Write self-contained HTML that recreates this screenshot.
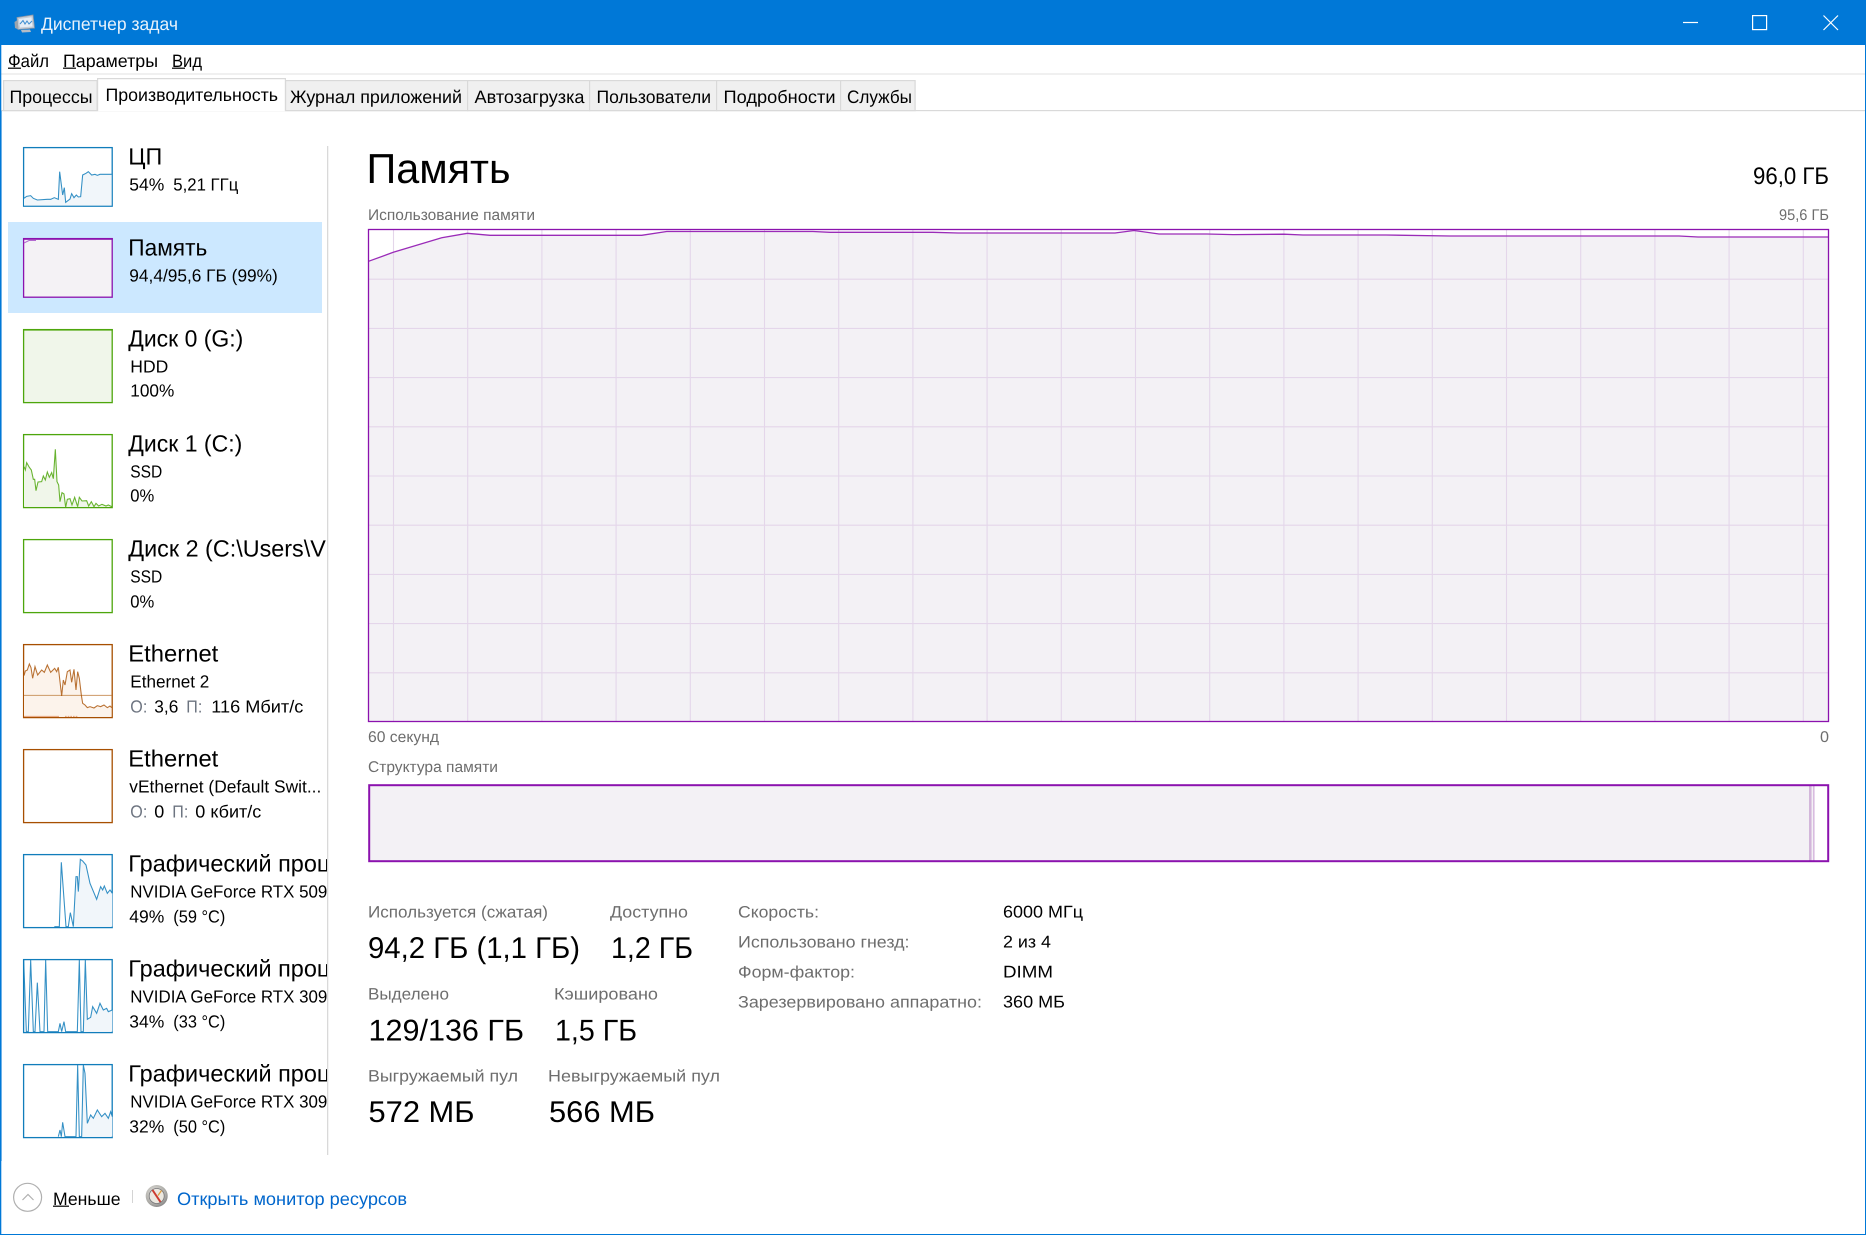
<!DOCTYPE html>
<html lang="ru"><head><meta charset="utf-8"><title>Диспетчер задач</title>
<style>
html,body{margin:0;padding:0;background:#fff;width:1866px;height:1235px;overflow:hidden}
svg{display:block;position:absolute;left:0;top:0}
text{font-family:"Liberation Sans","DejaVu Sans",sans-serif;fill:#000;text-rendering:geometricPrecision;white-space:pre}
.t{font-size:18px}.n{font-size:23.5px}.s{font-size:17.5px}.l{font-size:16.5px;fill:#6d6d6d}.g{fill:#6d7480}
.v{font-size:30px}.r{font-size:17px}
</style></head><body>
<svg width="1866" height="1235" viewBox="0 0 1866 1235" xmlns="http://www.w3.org/2000/svg">
<defs><clipPath id="c"><rect x="120" y="130" width="207" height="1030"/></clipPath>
<radialGradient id="rg" cx=".4" cy=".35" r=".75"><stop offset="0" stop-color="#e4e2dd"/><stop offset=".7" stop-color="#a9a8a4"/><stop offset="1" stop-color="#77777a"/></radialGradient></defs>
<rect width="1866" height="1235" fill="#fff"/>
<!-- title bar -->
<rect width="1866" height="45" fill="#0078d7"/>
<g>
<path d="M17 17.5 L33 15 L34.5 28 L18 29.5 Z" fill="#c4ccd6" stroke="#8c97a5" stroke-width=".8"/>
<path d="M19 19 L31.5 17.3 L32.5 26.5 L20 27.5 Z" fill="#e6eef6"/>
<path d="M20 24 L23 20.5 L25 24 L27 21 L29 24 L32 21" fill="none" stroke="#3f8ed0" stroke-width="1"/>
<path d="M14.5 22 L17.5 20 L18.5 29.5 L15 28 Z" fill="#9aa3ad"/>
<path d="M21 30 L30 29.5 L31 32 L22 32.5 Z" fill="#b4bcc6"/>
</g>
<text x="41" y="30" class="t" style="fill:#e8f2fb" textLength="137" lengthAdjust="spacingAndGlyphs">Диспетчер задач</text>
<path d="M1683 22.5H1698" stroke="#fff" stroke-width="1.2"/>
<rect x="1752.6" y="15.6" width="14" height="14" fill="none" stroke="#fff" stroke-width="1.2"/>
<path d="M1823.5 15.5L1838 30M1838 15.5L1823.5 30" stroke="#fff" stroke-width="1.2"/>
<!-- menu -->
<rect x="0" y="73" width="1866" height="2" fill="#f0f0f0"/>
<text x="8" y="67" class="t" textLength="41" lengthAdjust="spacingAndGlyphs">Файл</text>
<text x="63" y="67" class="t" textLength="95" lengthAdjust="spacingAndGlyphs">Параметры</text>
<text x="172" y="67" class="t" textLength="30" lengthAdjust="spacingAndGlyphs">Вид</text>
<rect x="8" y="67.6" width="13" height="1.2"/><rect x="63" y="67.6" width="13" height="1.2"/><rect x="172" y="67.6" width="13" height="1.2"/>
<!-- tabs -->
<rect x="0" y="110" width="1866" height="1.2" fill="#d9d9d9"/>
<g fill="#f0f0f0" stroke="#d9d9d9" stroke-width="1.2">
<rect x="3.6" y="80.6" width="93.5" height="30"/>
<rect x="285.6" y="80.6" width="182" height="30"/>
<rect x="467.6" y="80.6" width="122" height="30"/>
<rect x="589.6" y="80.6" width="127" height="30"/>
<rect x="716.6" y="80.6" width="124" height="30"/>
<rect x="840.6" y="80.6" width="74.5" height="30"/>
</g>
<path d="M97.6 111V78.6H285.4V111" fill="#fff" stroke="#d9d9d9" stroke-width="1.2"/>
<text x="9.5" y="103" class="t" textLength="83" lengthAdjust="spacingAndGlyphs">Процессы</text>
<text x="105.5" y="101" class="t" textLength="172.5" lengthAdjust="spacingAndGlyphs">Производительность</text>
<text x="290" y="103" class="t" textLength="172" lengthAdjust="spacingAndGlyphs">Журнал приложений</text>
<text x="474.5" y="103" class="t" textLength="110" lengthAdjust="spacingAndGlyphs">Автозагрузка</text>
<text x="596.5" y="103" class="t" textLength="114.5" lengthAdjust="spacingAndGlyphs">Пользователи</text>
<text x="723.5" y="103" class="t" textLength="112" lengthAdjust="spacingAndGlyphs">Подробности</text>
<text x="847" y="103" class="t" textLength="65" lengthAdjust="spacingAndGlyphs">Службы</text>
<!-- sidebar -->
<rect x="8" y="222" width="314" height="91" fill="#cce8ff"/>
<rect x="327" y="146" width="1.3" height="1009" fill="#d9d9d9"/>
<!-- thumbs -->
<g stroke-width="1.3">
<rect x="23.6" y="147.6" width="88.6" height="58.6" fill="#fff" stroke="#117dbb"/>
<rect x="23.6" y="238.6" width="88.6" height="58.6" fill="#f4f2f5" stroke="#8b12ae"/>
<rect x="23" y="238" width="89.8" height="1.8" fill="#8b12ae" stroke="none"/>
<rect x="23.6" y="329.6" width="88.6" height="73" fill="#f0f6ea" stroke="#4da60c"/>
<rect x="23" y="329" width="89.8" height="1.6" fill="#4da60c" stroke="none"/>
<rect x="23.6" y="434.6" width="88.6" height="73" fill="#fff" stroke="#4da60c"/>
<rect x="23.6" y="539.6" width="88.6" height="73" fill="#fff" stroke="#4da60c"/>
<rect x="23.6" y="644.6" width="88.6" height="73" fill="#fff" stroke="#a74f01"/>
<rect x="23.6" y="749.6" width="88.6" height="73" fill="#fff" stroke="#a74f01"/>
<rect x="23.6" y="854.6" width="88.6" height="73" fill="#fff" stroke="#117dbb"/>
<rect x="23.6" y="959.6" width="88.6" height="73" fill="#fff" stroke="#117dbb"/>
<rect x="23.6" y="1064.6" width="88.6" height="73" fill="#fff" stroke="#117dbb"/>
</g>
<path d="M24 243L29 240.5H36" fill="none" stroke="#b36ad0" stroke-width="1"/>
<!-- cpu graph -->
<g transform="translate(10,135) scale(.3333)">
<polygon fill="#f1f6fa" points="42,190 50,184 62,182 70,190 82,195 112,193 122,193 133,188 145,193 149,110 158,180 163,158 167,202 180,192 185,176 192,188 199,180 205,186 212,185 218,120 228,115 235,110 245,120 255,118 262,121 270,118 305,118 305,212 42,212"/>
<polyline fill="none" stroke="#117dbb" stroke-width="3.2" stroke-opacity=".85" points="42,190 50,184 62,182 70,190 82,195 112,193 122,193 133,188 145,193 149,110 158,180 163,158 167,202 180,192 185,176 192,188 199,180 205,186 212,185 218,120 228,115 235,110 245,120 255,118 262,121 270,118 305,118"/>
</g>
<!-- disk 1 graph -->
<g transform="translate(10,420) scale(.3333)">
<polygon fill="#f0f6ea" points="42,140 46,150 50,128 58,142 64,150 70,178 74,178 78,212 84,186 95,185 100,168 106,180 112,156 118,172 125,158 130,176 136,88 141,185 146,195 150,245 156,218 162,222 167,262 172,238 180,236 186,255 194,232 203,260 208,232 216,243 230,242 236,258 244,245 252,260 258,250 266,258 276,253 288,258 295,255 305,260 305,260 42,260"/>
<polyline fill="none" stroke="#4da60c" stroke-width="3.2" stroke-opacity=".85" points="42,140 46,150 50,128 58,142 64,150 70,178 74,178 78,212 84,186 95,185 100,168 106,180 112,156 118,172 125,158 130,176 136,88 141,185 146,195 150,245 156,218 162,222 167,262 172,238 180,236 186,255 194,232 203,260 208,232 216,243 230,242 236,258 244,245 252,260 258,250 266,258 276,253 288,258 295,255 305,260"/>
</g>
<!-- ethernet graph -->
<g transform="translate(10,635) scale(.3333)">
<polygon fill="#fcf3eb" points="42,122 46,108 52,105 58,87 63,98 68,130 75,95 83,120 95,105 103,112 112,90 122,112 134,100 140,110 145,97 155,183 160,135 165,150 172,110 180,105 185,142 192,103 198,165 203,110 208,130 214,180 218,205 225,210 232,218 240,215 252,219 262,212 272,215 282,210 292,218 300,213 305,218 305,245 42,245"/>
<path d="M42 181H305" stroke="#cd9866" stroke-width="3"/>
<polyline fill="none" stroke="#a74f01" stroke-width="3.2" stroke-opacity=".8" points="42,122 46,108 52,105 58,87 63,98 68,130 75,95 83,120 95,105 103,112 112,90 122,112 134,100 140,110 145,97 155,183 160,135 165,150 172,110 180,105 185,142 192,103 198,165 203,110 208,130 214,180 218,205 225,210 232,218 240,215 252,219 262,212 272,215 282,210 292,218 300,213 305,218"/>
<path d="M42 244H147" stroke="#e6a37a" stroke-width="3"/>
<path d="M165 244H205" stroke="#e6a37a" stroke-width="3" stroke-dasharray="5 3"/>
</g>
<!-- gpu graphs -->
<g transform="translate(0,630) scale(.3333)">
<polygon fill="#f1f6fa" points="220,890 228,740 232,740 235,785 241,688 248,693 258,705 270,760 290,808 302,770 308,780 313,768 322,790 330,780 337,790 337,890"/>
<polyline fill="none" stroke="#117dbb" stroke-width="3.2" stroke-opacity=".85" points="163,890 178,890 184,697 190,780 198,890 205,890 211,848 220,890 228,740 232,740 235,785 241,688 248,693 258,705 270,760 290,808 302,770 308,780 313,768 322,790 330,780 337,790"/>
</g>
<g transform="translate(0,940) scale(.3333)">
<polygon fill="#f1f6fa" points="250,275 256,60 262,238 272,232 278,200 290,220 300,190 310,210 320,205 325,215 337,210 337,275"/>
<polyline fill="none" stroke="#117dbb" stroke-width="3.2" stroke-opacity=".85" points="71,60 79,275 85,275 92,60 100,275 105,275 112,128 120,275 132,275 137,60 143,275 175,275 180,250 185,275 192,245 197,275 232,275 238,60 243,275 250,275 256,60 262,238 272,232 278,200 290,220 300,190 310,210 320,205 325,215 337,210"/>
</g>
<g transform="translate(0,940) scale(.3333)">
<polygon fill="#f1f6fa" points="245,590 250,375 255,400 262,550 272,525 280,535 292,510 305,530 315,520 325,535 332,515 337,530 337,590"/>
<polyline fill="none" stroke="#117dbb" stroke-width="3.2" stroke-opacity=".85" points="175,590 180,570 184,590 188,547 195,590 228,590 233,375 238,590 245,590 250,375 255,400 262,550 272,525 280,535 292,510 305,530 315,520 325,535 332,515 337,530"/>
</g>
<!-- sidebar text -->
<g clip-path="url(#c)"><g transform="translate(-0.7,-0.4)">
<text x="129" y="165" class="n" textLength="34" lengthAdjust="spacingAndGlyphs">ЦП</text>
<text x="130" y="191" class="s" textLength="35" lengthAdjust="spacingAndGlyphs">54%</text>
<text x="174" y="191" class="s" textLength="65" lengthAdjust="spacingAndGlyphs">5,21 ГГц</text>
<text x="129" y="256" class="n" textLength="79" lengthAdjust="spacingAndGlyphs">Память</text>
<text x="130" y="282" class="s" textLength="148.5" lengthAdjust="spacingAndGlyphs">94,4/95,6 ГБ (99%)</text>
<text x="129" y="347" class="n" textLength="115" lengthAdjust="spacingAndGlyphs">Диск 0 (G:)</text>
<text x="131" y="373" class="s" textLength="38" lengthAdjust="spacingAndGlyphs">HDD</text>
<text x="131" y="397" class="s" textLength="44" lengthAdjust="spacingAndGlyphs">100%</text>
<text x="129" y="452" class="n" textLength="114" lengthAdjust="spacingAndGlyphs">Диск 1 (C:)</text>
<text x="131" y="478" class="s" textLength="32" lengthAdjust="spacingAndGlyphs">SSD</text>
<text x="131" y="502" class="s" textLength="24" lengthAdjust="spacingAndGlyphs">0%</text>
<text x="129" y="557" class="n" textLength="197.5" lengthAdjust="spacingAndGlyphs">Диск 2 (C:\Users\V</text>
<text x="131" y="583" class="s" textLength="32" lengthAdjust="spacingAndGlyphs">SSD</text>
<text x="131" y="608" class="s" textLength="24" lengthAdjust="spacingAndGlyphs">0%</text>
<text x="129" y="662" class="n" textLength="90" lengthAdjust="spacingAndGlyphs">Ethernet</text>
<text x="131" y="688" class="s" textLength="79" lengthAdjust="spacingAndGlyphs">Ethernet 2</text>
<text x="131" y="713" class="s g" textLength="17" lengthAdjust="spacingAndGlyphs">О:</text>
<text x="155" y="713" class="s" textLength="24" lengthAdjust="spacingAndGlyphs">3,6</text>
<text x="187" y="713" class="s g" textLength="16" lengthAdjust="spacingAndGlyphs">П:</text>
<text x="212" y="713" class="s" textLength="92" lengthAdjust="spacingAndGlyphs">116 Мбит/с</text>
<text x="129" y="767" class="n" textLength="90" lengthAdjust="spacingAndGlyphs">Ethernet</text>
<text x="130" y="793" class="s" textLength="192" lengthAdjust="spacingAndGlyphs">vEthernet (Default Swit...</text>
<text x="131" y="818" class="s g" textLength="17" lengthAdjust="spacingAndGlyphs">О:</text>
<text x="155" y="818" class="s" textLength="10" lengthAdjust="spacingAndGlyphs">0</text>
<text x="173" y="818" class="s g" textLength="16" lengthAdjust="spacingAndGlyphs">П:</text>
<text x="196" y="818" class="s" textLength="66" lengthAdjust="spacingAndGlyphs">0 кбит/с</text>
<text x="129" y="872" class="n" textLength="202" lengthAdjust="spacingAndGlyphs">Графический проц</text>
<text x="131" y="898" class="s" textLength="197" lengthAdjust="spacingAndGlyphs">NVIDIA GeForce RTX 509</text>
<text x="130" y="923" class="s" textLength="35" lengthAdjust="spacingAndGlyphs">49%</text>
<text x="174" y="923" class="s" textLength="52" lengthAdjust="spacingAndGlyphs">(59 °C)</text>
<text x="129" y="977" class="n" textLength="202" lengthAdjust="spacingAndGlyphs">Графический проц</text>
<text x="131" y="1003" class="s" textLength="197" lengthAdjust="spacingAndGlyphs">NVIDIA GeForce RTX 309</text>
<text x="130" y="1028" class="s" textLength="35" lengthAdjust="spacingAndGlyphs">34%</text>
<text x="174" y="1028" class="s" textLength="52" lengthAdjust="spacingAndGlyphs">(33 °C)</text>
<text x="129" y="1082" class="n" textLength="202" lengthAdjust="spacingAndGlyphs">Графический проц</text>
<text x="131" y="1108" class="s" textLength="197" lengthAdjust="spacingAndGlyphs">NVIDIA GeForce RTX 309</text>
<text x="130" y="1133" class="s" textLength="35" lengthAdjust="spacingAndGlyphs">32%</text>
<text x="174" y="1133" class="s" textLength="52" lengthAdjust="spacingAndGlyphs">(50 °C)</text>
</g></g>
<!-- main header -->
<text x="366.5" y="183" style="font-size:42px" textLength="144" lengthAdjust="spacingAndGlyphs">Память</text>
<text x="1753" y="184" style="font-size:24px" textLength="76" lengthAdjust="spacingAndGlyphs">96,0 ГБ</text>
<text x="368" y="220" class="l" style="font-size:15.5px" textLength="167" lengthAdjust="spacingAndGlyphs">Использование памяти</text>
<text x="1779" y="220" class="l" style="font-size:15.5px" textLength="50" lengthAdjust="spacingAndGlyphs">95,6 ГБ</text>
<!-- main graph -->
<rect x="368.5" y="229.5" width="1460" height="492" fill="#fff"/>
<polygon fill="#f3f1f5" points="368.5,261.3 393.3,252.3 441.7,237.7 467.3,233.3 490,235.3 641.7,235.3 666.7,231.5 813,231.5 830,232.3 933,232.3 958,233 1115,233 1134,230.5 1159,234 1207,234 1233,234.6 1284,234.2 1303,235 1386,235 1449.5,236 1679,236 1698,237 1828.5,237 1828.5,721.5 368.5,721.5"/>
<g fill="none" stroke="#e4d6ea" stroke-width="1.1">
<path d="M369 279.2H1828M369 328.4H1828M369 377.6H1828M369 426.8H1828M369 476H1828M369 525.2H1828M369 574.4H1828M369 623.6H1828M369 672.8H1828"/>
<path d="M393.5 230V721M467.7 230V721M541.9 230V721M616.1 230V721M690.3 230V721M764.5 230V721M838.7 230V721M912.9 230V721M987.1 230V721M1061.3 230V721M1135.5 230V721M1209.7 230V721M1283.9 230V721M1358.1 230V721M1432.3 230V721M1506.5 230V721M1580.7 230V721M1654.9 230V721M1729.1 230V721M1803.3 230V721"/>
</g>
<polyline fill="none" stroke="#9a2bb8" stroke-width="1.3" points="368.5,261.3 393.3,252.3 441.7,237.7 467.3,233.3 490,235.3 641.7,235.3 666.7,231.5 813,231.5 830,232.3 933,232.3 958,233 1115,233 1134,230.5 1159,234 1207,234 1233,234.6 1284,234.2 1303,235 1386,235 1449.5,236 1679,236 1698,237 1828.5,237"/>
<rect x="368.5" y="229.5" width="1460" height="492" fill="none" stroke="#8b12ae" stroke-width="1.3"/>
<text x="368" y="742" class="l" style="font-size:15.5px" textLength="71" lengthAdjust="spacingAndGlyphs">60 секунд</text>
<text x="1820" y="742" class="l" style="font-size:15.5px" textLength="9" lengthAdjust="spacingAndGlyphs">0</text>
<text x="368" y="772" class="l" style="font-size:15.5px" textLength="130" lengthAdjust="spacingAndGlyphs">Структура памяти</text>
<!-- structure bar -->
<rect x="369" y="785.2" width="1459" height="76" fill="#fff"/>
<rect x="369" y="785.2" width="1440" height="76" fill="#f3f1f5"/>
<rect x="1809" y="785.2" width="2.7" height="76" fill="#d2b6da"/>
<rect x="1811.7" y="785.2" width="1.3" height="76" fill="#f3f1f5"/>
<rect x="1813" y="785.2" width="1.6" height="76" fill="#d8bce0"/>
<rect x="369.2" y="785.2" width="1459" height="76" fill="none" stroke="#8b12ae" stroke-width="2"/>
<!-- stats -->
<text x="368" y="917.6" class="l" textLength="180" lengthAdjust="spacingAndGlyphs">Используется (сжатая)</text>
<text x="610" y="917.6" class="l" textLength="78" lengthAdjust="spacingAndGlyphs">Доступно</text>
<text x="368" y="958" class="v" textLength="212" lengthAdjust="spacingAndGlyphs">94,2 ГБ (1,1 ГБ)</text>
<text x="611" y="958" class="v" textLength="82" lengthAdjust="spacingAndGlyphs">1,2 ГБ</text>
<text x="368" y="999.6" class="l" textLength="81" lengthAdjust="spacingAndGlyphs">Выделено</text>
<text x="554" y="999.6" class="l" textLength="104" lengthAdjust="spacingAndGlyphs">Кэшировано</text>
<text x="368.5" y="1040.4" class="v" textLength="155.5" lengthAdjust="spacingAndGlyphs">129/136 ГБ</text>
<text x="555" y="1040.4" class="v" textLength="82" lengthAdjust="spacingAndGlyphs">1,5 ГБ</text>
<text x="368" y="1081.6" class="l" textLength="150" lengthAdjust="spacingAndGlyphs">Выгружаемый пул</text>
<text x="548" y="1081.6" class="l" textLength="172" lengthAdjust="spacingAndGlyphs">Невыгружаемый пул</text>
<text x="368.5" y="1122" class="v" textLength="106" lengthAdjust="spacingAndGlyphs">572 МБ</text>
<text x="549" y="1122" class="v" textLength="106" lengthAdjust="spacingAndGlyphs">566 МБ</text>
<text x="738" y="917.6" class="l" textLength="81" lengthAdjust="spacingAndGlyphs">Скорость:</text>
<text x="738" y="947.6" class="l" textLength="171.5" lengthAdjust="spacingAndGlyphs">Использовано гнезд:</text>
<text x="738" y="977.6" class="l" textLength="117" lengthAdjust="spacingAndGlyphs">Форм-фактор:</text>
<text x="738" y="1007.6" class="l" textLength="244" lengthAdjust="spacingAndGlyphs">Зарезервировано аппаратно:</text>
<text x="1003" y="917.6" class="r" textLength="80" lengthAdjust="spacingAndGlyphs">6000 МГц</text>
<text x="1003" y="947.6" class="r" textLength="48" lengthAdjust="spacingAndGlyphs">2 из 4</text>
<text x="1003" y="977.6" class="r" textLength="50" lengthAdjust="spacingAndGlyphs">DIMM</text>
<text x="1003" y="1007.6" class="r" textLength="62" lengthAdjust="spacingAndGlyphs">360 МБ</text>
<!-- footer -->
<circle cx="27.6" cy="1197.3" r="14" fill="#fff" stroke="#b0b0b0" stroke-width="1.2"/>
<path d="M22.5 1200L28 1194.5L33.5 1200" fill="none" stroke="#b0b0b0" stroke-width="1.2"/>
<text x="53" y="1205" class="t" textLength="67.5" lengthAdjust="spacingAndGlyphs">Меньше</text>
<rect x="53" y="1205.6" width="16" height="1.2"/>
<rect x="132" y="1190" width="1" height="13" fill="#d4d4d4"/>
<circle cx="156.7" cy="1196" r="11" fill="url(#rg)"/>
<circle cx="156.7" cy="1196" r="7.5" fill="#ece8e0" stroke="#77777a" stroke-width=".8"/>
<path d="M152.5 1190L160.5 1202" stroke="#cc3a2e" stroke-width="2"/>
<path d="M161.5 1190.5L158 1195.5" stroke="#e0a040" stroke-width="1.3"/>
<text x="177" y="1205" class="t" style="fill:#0066cc" textLength="230" lengthAdjust="spacingAndGlyphs">Открыть монитор ресурсов</text>
<!-- window border -->
<rect x="0" y="0" width="1.3" height="1235" fill="#0078d7"/>
<rect x="1.3" y="111" width="0.6" height="1050" fill="#5fa8e4"/>
<rect x="1865" y="0" width="1" height="1235" fill="#0078d7"/>
<rect x="0" y="1234" width="1866" height="1" fill="#0078d7"/>
</svg>
</body></html>
